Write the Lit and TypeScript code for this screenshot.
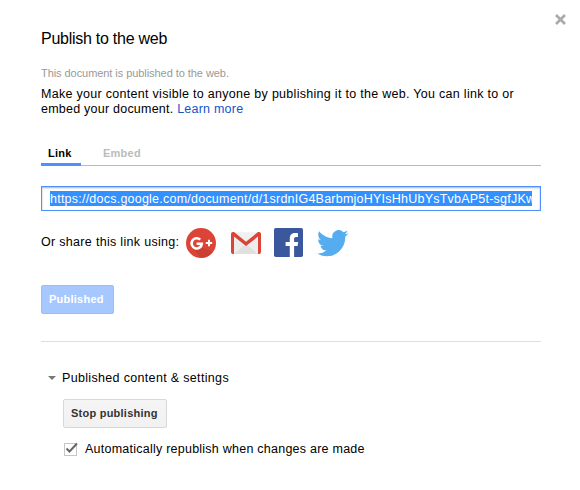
import { LitElement, html, css, svg } from "lit";
import { customElement } from "lit/decorators.js";

const googlePlus = svg`
  <circle cx="15" cy="15" r="15" fill="#db4437"/>
  <path d="M17 20 L27 24 A15 15 0 0 1 15 30 L7 20Z" fill="#c23c31" opacity=".6"/>
  <path d="M14.2 11.6 A5.1 5.1 0 1 0 15.8 15.8 H10.6" fill="none" stroke="#fff" stroke-width="2.6"/>
  <path d="M19.8 15 H26.2 M23 11.8 V18.2" stroke="#fff" stroke-width="2"/>`;

const gmail = svg`
  <path d="M2 .5 H28 V22 H2Z" fill="#ededed"/>
  <path d="M3 22 L15 12 L27 22Z" fill="#e0e0e0"/>
  <path d="M4 .5 H26 L15 10Z" fill="#f0f0f0"/>
  <path d="M2 0 H3 L15 9.8 L27 0 H28 A2 2 0 0 1 30 2 V20 A2 2 0 0 1 28 22 H27 V4.6 L15 14 L3 4.6 V22 H2 A2 2 0 0 1 0 20 V2 A2 2 0 0 1 2 0Z" fill="#db4437"/>`;

const facebook = svg`
  <rect width="29" height="29" rx="1.8" fill="#3b579d"/>
  <path d="M15.8 29 V18 H11.6 V14 H15.8 V10.4 C15.8 6.7 18 5 21.4 5 H24 V9 H22.3 C20.5 9 20.1 9.7 20.1 11 V14 H24.2 L23.6 18 H20.1 V29Z" fill="#fff"/>`;

const twitter = svg`
  <path transform="translate(0 -2.9) scale(1.31 1.34)" d="M23.95 4.57a10 10 0 0 1-2.82.77 4.96 4.96 0 0 0 2.16-2.72c-.95.55-2 .96-3.13 1.18a4.92 4.92 0 0 0-8.38 4.48C7.69 8.1 4.07 6.13 1.64 3.16a4.82 4.82 0 0 0-.67 2.48c0 1.71.87 3.21 2.19 4.1a4.9 4.9 0 0 1-2.23-.62v.06a4.92 4.92 0 0 0 3.95 4.83 5 5 0 0 1-2.21.08 4.94 4.94 0 0 0 4.6 3.42A9.87 9.87 0 0 1 0 19.54a14 14 0 0 0 7.55 2.21c9.05 0 14-7.5 14-13.98 0-.21 0-.42-.02-.63a9.94 9.94 0 0 0 2.46-2.55z" fill="#55acee"/>`;

@customElement("app-root")
export class AppRoot extends LitElement {
  static styles = css`
    :host {
      display: block;
      position: relative;
      box-sizing: border-box;
      height: 490px;
      padding: 28px 39px 0 41px;
      overflow: hidden;
      background: #fff;
      color: #000;
      font: 12.5px/15px "Liberation Sans", Arial, sans-serif;
      letter-spacing: 0.29px;
      white-space: nowrap;
    }
    svg { display: block; flex: none; }
    .close { position: absolute; left: 554px; top: 13px; }
    h1 { margin: 0; font-size: 16px; line-height: 21px; font-weight: 400; letter-spacing: -0.26px; }
    .status { margin-top: 17px; color: #999; font-size: 11px; line-height: 14px; letter-spacing: -0.06px; }
    .intro { margin-top: 7px; }
    .second { letter-spacing: 0.23px; }
    .link { color: #15c; }
    .tabs { display: flex; height: 24px; margin-top: 24px; border-bottom: 1px solid #bbb; font-size: 11px; font-weight: 700; line-height: 24px; letter-spacing: 0.25px; }
    .tab { height: 22px; padding: 0 7px; color: #bbb; }
    .tab.on { width: 26px; color: #000; border-bottom: 3px solid #4d90fe; }
    .tab.next { padding-left: 22px; }
    .url { box-sizing: border-box; height: 25px; margin-top: 20px; padding: 4px 8px; border: 1px solid #4d90fe; box-shadow: inset 0 1px 2px rgba(0, 0, 0, 0.3); }
    .selected { height: 15px; line-height: 17px; overflow: hidden; background: #3390ff; color: #fff; letter-spacing: 0.23px; }
    .share { display: flex; align-items: center; height: 30px; margin-top: 17px; }
    .share-label { width: 145px; line-height: 28px; height: 30px; letter-spacing: 0.31px; }
    .gmail { margin-left: 15px; }
    .facebook { margin-left: 13px; align-self: flex-start; }
    .twitter { margin-left: 14px; }
    .button { box-sizing: border-box; height: 29px; padding-left: 7px; border: 1px solid; border-radius: 2px; font-size: 11px; font-weight: 700; line-height: 27px; letter-spacing: 0.24px; }
    .published { width: 73px; margin-top: 27px; background: #a6c8ff; border-color: #98bdf8; color: #fff; }
    .rule { height: 1px; margin-top: 27px; background: #ddd; }
    .section { display: flex; align-items: center; gap: 6px; height: 15px; margin: 28px 0 0 7px; line-height: 17px; letter-spacing: 0.33px; }
    .section span, .option span { padding-top: 1px; }
    .stop { width: 104px; margin: 14px 0 0 22px; background: linear-gradient(#f5f5f5, #f1f1f1); border-color: #d8d8d8; color: #333; }
    .option { display: flex; align-items: center; gap: 6px; height: 15px; margin: 13px 0 0 22px; line-height: 16px; letter-spacing: 0.24px; }
  `;

  render() {
    return html`
      <svg class="close" width="13" height="13"><path d="M2 2 L11 11 M11 2 L2 11" stroke="#aaa" stroke-width="2.7"/></svg>
      <h1>Publish to the web</h1>
      <div class="status">This document is published to the web.</div>
      <div class="intro">
        Make your content visible to anyone by publishing it to the web. You can link to or<br><span class="second">embed your document. <span class="link">Learn more</span></span>
      </div>
      <div class="tabs"><div class="tab on">Link</div><div class="tab next">Embed</div></div>
      <div class="url"><div class="selected">https://docs.google.com/document/d/1srdnIG4BarbmjoHYIsHhUbYsTvbAP5t-sgfJKw</div></div>
      <div class="share">
        <span class="share-label">Or share this link using:</span>
        <svg width="30" height="30">${googlePlus}</svg>
        <svg class="gmail" width="30" height="22">${gmail}</svg>
        <svg class="facebook" width="29" height="29">${facebook}</svg>
        <svg class="twitter" width="32" height="27">${twitter}</svg>
      </div>
      <div class="button published">Published</div>
      <div class="rule"></div>
      <div class="section">
        <svg width="8" height="4"><path d="M0 0 H8 L4 4Z" fill="#777"/></svg>
        <span>Published content &amp; settings</span>
      </div>
      <div class="button stop">Stop publishing</div>
      <div class="option">
        <svg width="16" height="15"><rect x="1.5" y="2.5" width="12" height="12" fill="#fff" stroke="#c6c6c6"/><path d="M3.5 7.5 L6.5 10.5 L14 2.5" fill="none" stroke="#666" stroke-width="2"/></svg>
        <span>Automatically republish when changes are made</span>
      </div>`;
  }
}
